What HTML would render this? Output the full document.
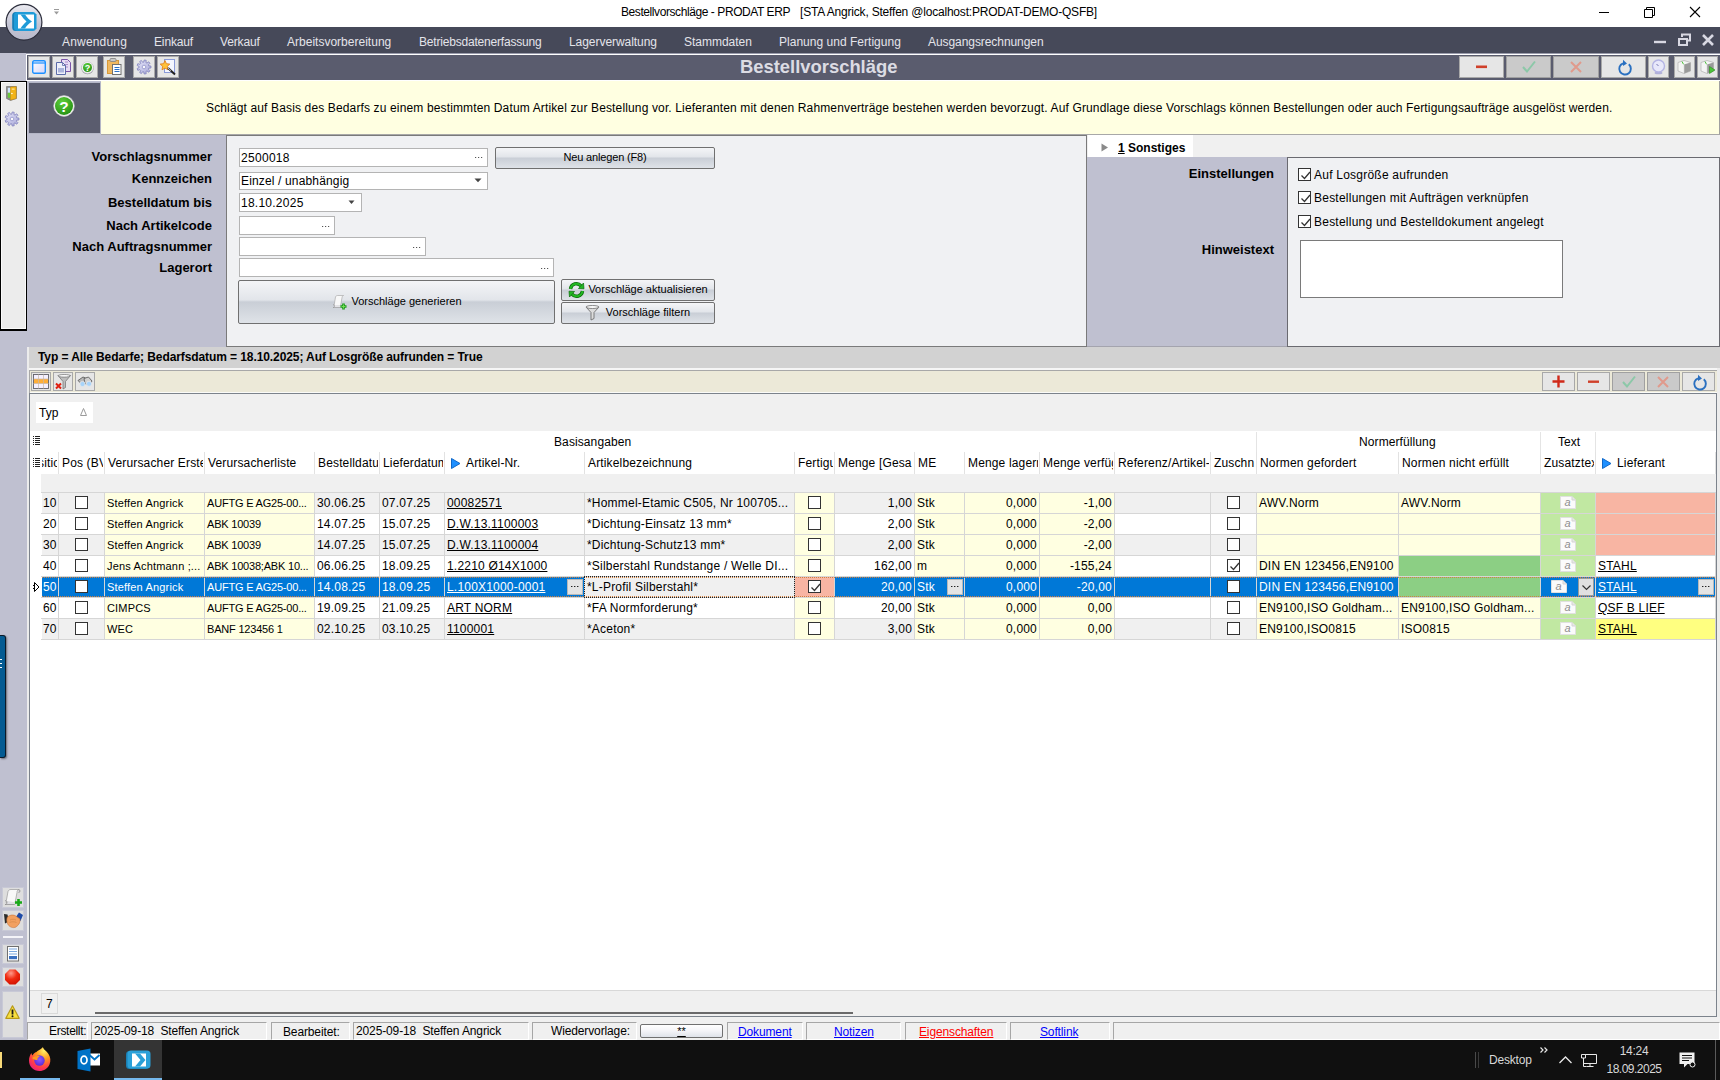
<!DOCTYPE html><html lang="de"><head><meta charset="utf-8"><title>Bestellvorschläge - PRODAT ERP</title><style>
html,body{margin:0;padding:0;}
body{width:1720px;height:1080px;overflow:hidden;position:relative;background:#bfc0d0;font-family:"Liberation Sans",sans-serif;font-size:12px;color:#000;}
div{position:absolute;box-sizing:border-box;white-space:nowrap;}
svg{position:absolute;overflow:visible;}
.t{line-height:14px;height:14px;}
.b{font-weight:bold;}
.m{color:#e4e4ea;font-size:12px;line-height:14px;}
.tb{background:#e6e6e6;border:1px solid #a8a8a8;}
.tbd{background:#cacaca;border:1px solid #a0a0a0;}
.in{background:#fff;border:1px solid #b4b4b4;}
.lbl{font-weight:bold;font-size:13px;line-height:16px;text-align:right;}
.btn{border:1px solid #707070;border-radius:2px;background:linear-gradient(#f4f5f7 0%,#e2e5ea 45%,#c9ced6 50%,#dfe3e8 100%);font-size:11px;text-align:center;}
.cb{width:13px;height:13px;background:#fff;border:1px solid #333;}
.c{line-height:20px;height:20px;overflow:hidden;letter-spacing:0.2px;}
.u{text-decoration:underline;}
.r{text-align:right;}
.s{font-size:11px;}
.h{line-height:20px;height:20px;overflow:hidden;letter-spacing:0.15px;}
</style></head><body>
<div style="left:0px;top:0px;width:1720px;height:27px;background:#fff;"></div>
<div class="t" style="left:621px;top:5px;letter-spacing:-0.42px;">Bestellvorschläge - PRODAT ERP</div>
<div class="t" style="left:800px;top:5px;letter-spacing:-0.2px;">[STA Angrick, Steffen @localhost:PRODAT-DEMO-QSFB]</div>
<svg style="left:1590px;top:0" width="130" height="27"><path d="M9 12.5h10" stroke="#000" fill="none"/><path d="M54.5 9.5h8v8h-8z M56.5 9.5v-2h8v8h-2" stroke="#000" fill="none"/><path d="M100 7l10 10M110 7l-10 10" stroke="#000" fill="none" stroke-width="1.1"/></svg>
<svg style="left:53px;top:8px" width="8" height="8"><path d="M1 1.5h5" stroke="#9a9a9a" fill="none"/><path d="M1 3.5h5l-2.5 3z" fill="#9a9a9a"/></svg>
<div style="left:0px;top:27px;width:1720px;height:26px;background:#464959;"></div>
<div class="m" style="left:62px;top:35px;letter-spacing:0.18px;">Anwendung</div>
<div class="m" style="left:154px;top:35px;letter-spacing:-0.14px;">Einkauf</div>
<div class="m" style="left:220px;top:35px;letter-spacing:-0.13px;">Verkauf</div>
<div class="m" style="left:287px;top:35px;letter-spacing:0.01px;">Arbeitsvorbereitung</div>
<div class="m" style="left:419px;top:35px;letter-spacing:-0.19px;">Betriebsdatenerfassung</div>
<div class="m" style="left:569px;top:35px;letter-spacing:-0.05px;">Lagerverwaltung</div>
<div class="m" style="left:684px;top:35px;letter-spacing:-0.02px;">Stammdaten</div>
<div class="m" style="left:779px;top:35px;letter-spacing:0.02px;">Planung und Fertigung</div>
<div class="m" style="left:928px;top:35px;letter-spacing:-0.07px;">Ausgangsrechnungen</div>
<svg style="left:1650px;top:30px" width="70" height="20"><path d="M4 12h12" stroke="#d8d8e2" stroke-width="2.4" fill="none"/><path d="M29 9h8v6h-8z" stroke="#d8d8e2" stroke-width="2" fill="none"/><path d="M32 7v-2.5h8v6h-2" stroke="#d8d8e2" stroke-width="2" fill="none"/><path d="M53 5l10 10M63 5l-10 10" stroke="#d8d8e2" stroke-width="2.6" fill="none"/></svg>
<div style="left:26px;top:53px;width:1694px;height:1px;background:#9a9cac;"></div>
<div style="left:26px;top:54px;width:1694px;height:1px;background:#fff;"></div>
<div style="left:26px;top:54px;width:1px;height:27px;background:#fff;"></div>
<div style="left:27px;top:55px;width:1693px;height:25px;background:#5a5c6e;"></div>
<div class="t" style="left:740px;top:56px;font-weight:bold;font-size:18.4px;line-height:22px;height:22px;color:#dcdce4;">Bestellvorschläge</div>
<div class="tb" style="left:28px;top:56px;width:22px;height:22px;"></div>
<div class="tb" style="left:52px;top:56px;width:22px;height:22px;"></div>
<div class="tb" style="left:76px;top:56px;width:22px;height:22px;"></div>
<div class="tb" style="left:103px;top:56px;width:22px;height:22px;"></div>
<div class="tb" style="left:133px;top:56px;width:22px;height:22px;"></div>
<div class="tb" style="left:157px;top:56px;width:22px;height:22px;"></div>
<div class="tb" style="left:1459px;top:56px;width:45px;height:22px;"></div>
<div class="tbd" style="left:1506px;top:56px;width:45px;height:22px;"></div>
<div class="tbd" style="left:1553px;top:56px;width:46px;height:22px;"></div>
<div class="tb" style="left:1601px;top:56px;width:45px;height:22px;"></div>
<div class="tb" style="left:1648px;top:56px;width:21px;height:22px;"></div>
<div class="tb" style="left:1674px;top:56px;width:21px;height:22px;"></div>
<div class="tb" style="left:1697px;top:56px;width:21px;height:22px;"></div>
<div style="left:26px;top:80px;width:1694px;height:1px;background:#fff;"></div>
<div style="left:101px;top:81px;width:1619px;height:54px;background:#ffffe1;border-right:1px solid #a0a0a0;border-bottom:1px solid #a8a8a8;"></div>
<div style="left:28px;top:82px;width:73px;height:52px;background:#5a5c6e;border:1px solid #b4b6c6;"></div>
<div class="t" style="left:206px;top:101px;letter-spacing:0.14px;">Schlägt auf Basis des Bedarfs zu einem bestimmten Datum Artikel zur Bestellung vor. Lieferanten mit denen Rahmenverträge bestehen werden bevorzugt. Auf Grundlage diese Vorschlags können Bestellungen oder auch Fertigungsaufträge ausgelöst werden.</div>
<div style="left:0px;top:81px;width:27px;height:250px;background:#ececec;border:1px solid #000;border-width:1px 1px 2px 1px;box-shadow:inset 1px 1px 0 #fafafa,inset -1px -1px 0 #fafafa;"></div>
<div style="left:226px;top:135px;width:861px;height:212px;background:#f0f1f3;border:1px solid #7a7a7a;"></div>
<div class="lbl" style="left:39px;top:149px;width:173px;">Vorschlagsnummer</div>
<div class="lbl" style="left:39px;top:171px;width:173px;">Kennzeichen</div>
<div class="lbl" style="left:39px;top:195px;width:173px;">Bestelldatum bis</div>
<div class="lbl" style="left:39px;top:218px;width:173px;">Nach Artikelcode</div>
<div class="lbl" style="left:39px;top:239px;width:173px;">Nach Auftragsnummer</div>
<div class="lbl" style="left:39px;top:260px;width:173px;">Lagerort</div>
<div class="in" style="left:239px;top:148px;width:249px;height:19px;"></div>
<div class="in" style="left:239px;top:172px;width:249px;height:18px;"></div>
<div class="in" style="left:239px;top:193px;width:123px;height:19px;"></div>
<div class="in" style="left:239px;top:216px;width:96px;height:19px;"></div>
<div class="in" style="left:239px;top:237px;width:187px;height:19px;"></div>
<div class="in" style="left:239px;top:258px;width:315px;height:19px;"></div>
<div class="t" style="left:241px;top:151px;letter-spacing:0.3px;">2500018</div>
<div class="t" style="left:241px;top:174px;letter-spacing:0.15px;">Einzel / unabhängig</div>
<div class="t" style="left:241px;top:196px;letter-spacing:0.25px;">18.10.2025</div>
<div class="btn" style="left:495px;top:147px;width:220px;height:22px;line-height:18px;letter-spacing:-0.15px;">Neu anlegen (F8)</div>
<div class="btn" style="left:238px;top:280px;width:317px;height:44px;line-height:40px;"><span style="position:relative;left:10px;">Vorschläge generieren</span></div>
<svg style="left:332px;top:295px" width="15" height="15"><path d="M2 11l1.500-9c0.300-1 1-1.500 2-1.500h6c-1 0.500-1.500 1.200-1.500 2.200l-1.500 8.300z" fill="#f8f8f8" stroke="#a0a0a0" stroke-width="0.600"/><path d="M1 9.500c0.800 0 1.500 0.600 1.500 1.500s-0.700 1.500-1.500 1.500h7c0.800 0 1.500-0.700 1.500-1.500" fill="#e4e4e8" stroke="#909090" stroke-width="0.600"/><path d="M8.500 11.500h6M11.500 8.500v6" stroke="#1a9a1a" stroke-width="2.600"/><path d="M9.500 11.500h4M11.500 9.500v4" stroke="#7ae05a" stroke-width="0.900"/></svg>
<div class="btn" style="left:561px;top:279px;width:154px;height:22px;line-height:18px;"><span style="position:relative;left:10px;">Vorschläge aktualisieren</span></div>
<svg style="left:568px;top:282px" width="17" height="16"><path d="M2.500 7a6 6 0 0 1 10.500-3.200" stroke="#0a6a0a" stroke-width="3.400" fill="none"/><path d="M2.500 7a6 6 0 0 1 10.500-3.200" stroke="#22b822" stroke-width="2" fill="none"/><path d="M10.500 6.500l5.500 0.300l-0.500-5.800z" fill="#22b822" stroke="#0a6a0a" stroke-width="0.700"/><path d="M14.500 9a6 6 0 0 1-10.500 3.200" stroke="#0a6a0a" stroke-width="3.400" fill="none"/><path d="M14.500 9a6 6 0 0 1-10.500 3.200" stroke="#22b822" stroke-width="2" fill="none"/><path d="M6.500 9.500l-5.500-0.300l0.500 5.800z" fill="#22b822" stroke="#0a6a0a" stroke-width="0.700"/></svg>
<div class="btn" style="left:561px;top:302px;width:154px;height:22px;line-height:18px;"><span style="position:relative;left:10px;">Vorschläge filtern</span></div>
<svg style="left:585px;top:305px" width="15" height="16"><path d="M1 2h13l-5 5.500v6l-3 1.500v-7.500z" fill="#dcdcdc" stroke="#707070" stroke-width="0.900"/><ellipse cx="7.500" cy="2" rx="6.500" ry="1.500" fill="#f8f8f8" stroke="#707070" stroke-width="0.800"/></svg>
<svg style="left:475px;top:157px" width="8" height="2"><path d="M0 0.500h1.200M3 0.500h1.200M6 0.500h1.200" stroke="#555" stroke-width="1"/></svg>
<svg style="left:322px;top:226px" width="8" height="2"><path d="M0 0.500h1.200M3 0.500h1.200M6 0.500h1.200" stroke="#555" stroke-width="1"/></svg>
<svg style="left:413px;top:247px" width="8" height="2"><path d="M0 0.500h1.200M3 0.500h1.200M6 0.500h1.200" stroke="#555" stroke-width="1"/></svg>
<svg style="left:541px;top:268px" width="8" height="2"><path d="M0 0.500h1.200M3 0.500h1.200M6 0.500h1.200" stroke="#555" stroke-width="1"/></svg>
<svg style="left:474px;top:178px" width="9" height="5"><path d="M0.500 0.500h7l-3.500 3.800z" fill="#444"/></svg>
<svg style="left:348px;top:200px" width="8" height="5"><path d="M0.500 0.500h6l-3 3.500z" fill="#444"/></svg>
<div style="left:1087px;top:135px;width:633px;height:22px;background:#f0f0f0;"></div>
<div style="left:1088px;top:135px;width:105px;height:22px;background:#fff;"></div>
<div class="t" style="left:1118px;top:141px;font-weight:bold;"><span class="u">1</span> Sonstiges</div>
<svg style="left:1101px;top:143px" width="8" height="9"><path d="M0.500 0.500L7 4.500L0.500 8.500z" fill="#8a8a8a"/></svg>
<div style="left:1287px;top:157px;width:433px;height:190px;background:#f0f1f3;border:1px solid #6a6a70;"></div>
<div class="lbl" style="left:1100px;top:166px;width:174px;">Einstellungen</div>
<div class="lbl" style="left:1100px;top:242px;width:174px;">Hinweistext</div>
<div class="cb" style="left:1298px;top:168px;"><svg style="left:1px;top:1px" width="11" height="11"><path d="M1.500 5.500L4.500 8.500L10 2" stroke="#333" stroke-width="1.300" fill="none"/></svg></div>
<div class="t" style="left:1314px;top:168px;letter-spacing:0.23px;">Auf Losgröße aufrunden</div>
<div class="cb" style="left:1298px;top:191px;"><svg style="left:1px;top:1px" width="11" height="11"><path d="M1.500 5.500L4.500 8.500L10 2" stroke="#333" stroke-width="1.300" fill="none"/></svg></div>
<div class="t" style="left:1314px;top:191px;letter-spacing:0.23px;">Bestellungen mit Aufträgen verknüpfen</div>
<div class="cb" style="left:1298px;top:215px;"><svg style="left:1px;top:1px" width="11" height="11"><path d="M1.500 5.500L4.500 8.500L10 2" stroke="#333" stroke-width="1.300" fill="none"/></svg></div>
<div class="t" style="left:1314px;top:215px;letter-spacing:0.23px;">Bestellung und Bestelldokument angelegt</div>
<div style="left:1300px;top:240px;width:263px;height:58px;background:#fff;border:1px solid #7a7a7a;"></div>
<div style="left:27px;top:347px;width:1693px;height:21px;background:#d2d2d2;"></div>
<div class="t" style="left:38px;top:350px;font-weight:bold;letter-spacing:-0.09px;">Typ = Alle Bedarfe; Bedarfsdatum = 18.10.2025; Auf Losgröße aufrunden = True</div>
<div style="left:27px;top:368px;width:1693px;height:2px;background:#f6f6f6;"></div>
<div style="left:27px;top:347px;width:2px;height:693px;background:#ececec;"></div>
<div style="left:1717px;top:368px;width:3px;height:672px;background:#ececec;"></div>
<div style="left:29px;top:370px;width:1688px;height:23px;background:#ece9d8;border-top:1px solid #a8a8a8;border-left:1px solid #a8a8a8;"></div>
<div style="left:1087px;top:346px;width:200px;height:1px;background:#a4a4ae;"></div>
<div style="left:30px;top:392px;width:1687px;height:1px;background:#fbfbf8;"></div>
<div class="tb" style="left:31px;top:372px;width:20px;height:19px;"></div>
<div class="tb" style="left:53px;top:372px;width:20px;height:19px;"></div>
<div class="tb" style="left:75px;top:372px;width:20px;height:19px;"></div>
<div class="tb" style="left:1542px;top:372px;width:33px;height:19px;"></div>
<div class="tb" style="left:1577px;top:372px;width:33px;height:19px;"></div>
<div class="tbd" style="left:1612px;top:372px;width:33px;height:19px;"></div>
<div class="tbd" style="left:1647px;top:372px;width:33px;height:19px;"></div>
<div class="tb" style="left:1682px;top:372px;width:33px;height:19px;"></div>
<div style="left:29px;top:393px;width:1688px;height:624px;background:#fff;border:1px solid #7c838c;"></div>
<div style="left:30px;top:394px;width:1686px;height:37px;background:#f0f0f0;"></div>
<div style="left:36px;top:402px;width:57px;height:21px;background:#fff;"></div>
<div class="t" style="left:39px;top:406px;">Typ</div>
<div style="left:30px;top:431px;width:1686px;height:43px;background:#fff;"></div>
<div style="left:30px;top:431px;width:11px;height:208px;background:#fff;"></div>
<div class="t" style="left:554px;top:435px;letter-spacing:0.1px;">Basisangaben</div>
<div class="t" style="left:1359px;top:435px;letter-spacing:0.1px;">Normerfüllung</div>
<div class="t" style="left:1558px;top:435px;">Text</div>
<div style="left:1256px;top:432px;width:1px;height:20px;background:#e4e4e4;"></div>
<div style="left:1540px;top:432px;width:1px;height:20px;background:#e4e4e4;"></div>
<div style="left:1595px;top:432px;width:1px;height:20px;background:#e4e4e4;"></div>
<div class="h" style="left:42px;top:453px;width:15px;"><span style="position:relative;left:-19px;">Position</span></div>
<div style="left:58px;top:452px;width:1px;height:22px;background:#e2e2e2;"></div>
<div class="h" style="left:59px;top:453px;width:44px;padding-left:3px;">Pos (BV</div>
<div style="left:104px;top:452px;width:1px;height:22px;background:#e2e2e2;"></div>
<div class="h" style="left:105px;top:453px;width:98px;padding-left:3px;">Verursacher Erste</div>
<div style="left:204px;top:452px;width:1px;height:22px;background:#e2e2e2;"></div>
<div class="h" style="left:205px;top:453px;width:108px;padding-left:3px;">Verursacherliste</div>
<div style="left:314px;top:452px;width:1px;height:22px;background:#e2e2e2;"></div>
<div class="h" style="left:315px;top:453px;width:63px;padding-left:3px;">Bestelldatu</div>
<div style="left:379px;top:452px;width:1px;height:22px;background:#e2e2e2;"></div>
<div class="h" style="left:380px;top:453px;width:63px;padding-left:3px;">Lieferdatum</div>
<div style="left:444px;top:452px;width:1px;height:22px;background:#e2e2e2;"></div>
<div class="h" style="left:445px;top:453px;width:137px;padding-left:21px;">Artikel-Nr.</div>
<svg style="left:451px;top:458px" width="10" height="11"><path d="M0.5 0.5L9 5.5L0.5 10.5z" fill="#1e90ff" stroke="#1068c8" stroke-width="1"/></svg>
<div style="left:584px;top:452px;width:1px;height:22px;background:#e2e2e2;"></div>
<div class="h" style="left:585px;top:453px;width:208px;padding-left:3px;">Artikelbezeichnung</div>
<div style="left:794px;top:452px;width:1px;height:22px;background:#e2e2e2;"></div>
<div class="h" style="left:795px;top:453px;width:38px;padding-left:3px;">Fertigu</div>
<div style="left:834px;top:452px;width:1px;height:22px;background:#e2e2e2;"></div>
<div class="h" style="left:835px;top:453px;width:78px;padding-left:3px;">Menge [Gesa</div>
<div style="left:914px;top:452px;width:1px;height:22px;background:#e2e2e2;"></div>
<div class="h" style="left:915px;top:453px;width:48px;padding-left:3px;">ME</div>
<div style="left:964px;top:452px;width:1px;height:22px;background:#e2e2e2;"></div>
<div class="h" style="left:965px;top:453px;width:73px;padding-left:3px;">Menge lagern</div>
<div style="left:1039px;top:452px;width:1px;height:22px;background:#e2e2e2;"></div>
<div class="h" style="left:1040px;top:453px;width:73px;padding-left:3px;">Menge verfüg</div>
<div style="left:1114px;top:452px;width:1px;height:22px;background:#e2e2e2;"></div>
<div class="h" style="left:1115px;top:453px;width:94px;padding-left:3px;">Referenz/Artikel-N</div>
<div style="left:1210px;top:452px;width:1px;height:22px;background:#e2e2e2;"></div>
<div class="h" style="left:1211px;top:453px;width:44px;padding-left:3px;">Zuschn</div>
<div style="left:1256px;top:452px;width:1px;height:22px;background:#e2e2e2;"></div>
<div class="h" style="left:1257px;top:453px;width:140px;padding-left:3px;">Normen gefordert</div>
<div style="left:1398px;top:452px;width:1px;height:22px;background:#e2e2e2;"></div>
<div class="h" style="left:1399px;top:453px;width:140px;padding-left:3px;">Normen nicht erfüllt</div>
<div style="left:1540px;top:452px;width:1px;height:22px;background:#e2e2e2;"></div>
<div class="h" style="left:1541px;top:453px;width:53px;padding-left:3px;">Zusatztex</div>
<div style="left:1595px;top:452px;width:1px;height:22px;background:#e2e2e2;"></div>
<div class="h" style="left:1596px;top:453px;width:117px;padding-left:21px;">Lieferant</div>
<svg style="left:1602px;top:458px" width="10" height="11"><path d="M0.5 0.5L9 5.5L0.5 10.5z" fill="#1e90ff" stroke="#1068c8" stroke-width="1"/></svg>
<div style="left:1715px;top:452px;width:1px;height:22px;background:#e2e2e2;"></div>
<div style="left:41px;top:474px;width:1675px;height:18px;background:#f0f0f0;"></div>
<div style="left:41px;top:492px;width:1675px;height:1px;background:#d6d6d6;"></div>
<div style="left:42px;top:493px;width:16px;height:20px;background:#f0f0f0;"></div>
<div class="c" style="left:42px;top:493px;width:16px;color:#000;padding-left:2px;padding-left:1px;">10</div>
<div style="left:59px;top:493px;width:45px;height:20px;background:#f0f0f0;"></div>
<div class="cb" style="left:75px;top:496px;"></div>
<div style="left:105px;top:493px;width:99px;height:20px;background:#ffffe1;"></div>
<div class="c" style="left:105px;top:493px;width:99px;color:#000;padding-left:2px;font-size:11px;letter-spacing:0.17px;">Steffen Angrick</div>
<div style="left:205px;top:493px;width:109px;height:20px;background:#ffffe1;"></div>
<div class="c" style="left:205px;top:493px;width:109px;color:#000;padding-left:2px;font-size:11px;letter-spacing:-0.2px;">AUFTG E AG25-00...</div>
<div style="left:315px;top:493px;width:64px;height:20px;background:#f0f0f0;"></div>
<div class="c" style="left:315px;top:493px;width:64px;color:#000;padding-left:2px;">30.06.25</div>
<div style="left:380px;top:493px;width:64px;height:20px;background:#f0f0f0;"></div>
<div class="c" style="left:380px;top:493px;width:64px;color:#000;padding-left:2px;">07.07.25</div>
<div style="left:445px;top:493px;width:139px;height:20px;background:#f0f0f0;"></div>
<div class="c" style="left:445px;top:493px;width:139px;color:#000;padding-left:2px;"><span class="u">00082571</span></div>
<div style="left:585px;top:493px;width:209px;height:20px;background:#f0f0f0;"></div>
<div class="c" style="left:585px;top:493px;width:209px;color:#000;padding-left:2px;">*Hommel-Etamic C505, Nr 100705...</div>
<div style="left:795px;top:493px;width:39px;height:20px;background:#ffffe1;"></div>
<div class="cb" style="left:808px;top:496px;"></div>
<div style="left:835px;top:493px;width:79px;height:20px;background:#f0f0f0;"></div>
<div class="c" style="left:835px;top:493px;width:79px;color:#000;text-align:right;padding-right:2px;">1,00</div>
<div style="left:915px;top:493px;width:49px;height:20px;background:#ffffe1;"></div>
<div class="c" style="left:915px;top:493px;width:49px;color:#000;padding-left:2px;">Stk</div>
<div style="left:965px;top:493px;width:74px;height:20px;background:#ffffe1;"></div>
<div class="c" style="left:965px;top:493px;width:74px;color:#000;text-align:right;padding-right:2px;">0,000</div>
<div style="left:1040px;top:493px;width:74px;height:20px;background:#ffffe1;"></div>
<div class="c" style="left:1040px;top:493px;width:74px;color:#000;text-align:right;padding-right:2px;">-1,00</div>
<div style="left:1115px;top:493px;width:95px;height:20px;background:#f0f0f0;"></div>
<div style="left:1211px;top:493px;width:45px;height:20px;background:#f0f0f0;"></div>
<div class="cb" style="left:1227px;top:496px;"></div>
<div style="left:1257px;top:493px;width:141px;height:20px;background:#ffffe1;"></div>
<div class="c" style="left:1257px;top:493px;width:141px;color:#000;padding-left:2px;">AWV.Norm</div>
<div style="left:1399px;top:493px;width:141px;height:20px;background:#ffffe1;"></div>
<div class="c" style="left:1399px;top:493px;width:141px;color:#000;padding-left:2px;">AWV.Norm</div>
<div style="left:1541px;top:493px;width:54px;height:20px;background:#c1e8a2;"></div>
<div style="left:1560px;top:496px;width:16px;height:13px;"><svg style="left:0;top:0" width="16" height="13"><path d="M0.5 0.5h11.5l3.5 3.5v8.5h-15z" fill="#fbfbfb" stroke="#e0e0e0"/><path d="M12 0.5v3.5h3.5" fill="#e8e8e8" stroke="#d4d4d4"/></svg><div style="left:3px;top:0;width:9px;font-size:11px;line-height:12px;font-style:italic;color:#8e8e8e;text-align:center;">a</div></div>
<div style="left:1596px;top:493px;width:119px;height:20px;background:#f8b5a3;"></div>
<div style="left:41px;top:513px;width:1675px;height:1px;background:#d6d6d6;"></div>
<div style="left:42px;top:514px;width:16px;height:20px;background:#fff;"></div>
<div class="c" style="left:42px;top:514px;width:16px;color:#000;padding-left:2px;padding-left:1px;">20</div>
<div style="left:59px;top:514px;width:45px;height:20px;background:#fff;"></div>
<div class="cb" style="left:75px;top:517px;"></div>
<div style="left:105px;top:514px;width:99px;height:20px;background:#ffffe1;"></div>
<div class="c" style="left:105px;top:514px;width:99px;color:#000;padding-left:2px;font-size:11px;letter-spacing:0.17px;">Steffen Angrick</div>
<div style="left:205px;top:514px;width:109px;height:20px;background:#ffffe1;"></div>
<div class="c" style="left:205px;top:514px;width:109px;color:#000;padding-left:2px;font-size:11px;letter-spacing:-0.2px;">ABK 10039</div>
<div style="left:315px;top:514px;width:64px;height:20px;background:#fff;"></div>
<div class="c" style="left:315px;top:514px;width:64px;color:#000;padding-left:2px;">14.07.25</div>
<div style="left:380px;top:514px;width:64px;height:20px;background:#fff;"></div>
<div class="c" style="left:380px;top:514px;width:64px;color:#000;padding-left:2px;">15.07.25</div>
<div style="left:445px;top:514px;width:139px;height:20px;background:#fff;"></div>
<div class="c" style="left:445px;top:514px;width:139px;color:#000;padding-left:2px;"><span class="u">D.W.13.1100003</span></div>
<div style="left:585px;top:514px;width:209px;height:20px;background:#fff;"></div>
<div class="c" style="left:585px;top:514px;width:209px;color:#000;padding-left:2px;">*Dichtung-Einsatz 13 mm*</div>
<div style="left:795px;top:514px;width:39px;height:20px;background:#ffffe1;"></div>
<div class="cb" style="left:808px;top:517px;"></div>
<div style="left:835px;top:514px;width:79px;height:20px;background:#fff;"></div>
<div class="c" style="left:835px;top:514px;width:79px;color:#000;text-align:right;padding-right:2px;">2,00</div>
<div style="left:915px;top:514px;width:49px;height:20px;background:#ffffe1;"></div>
<div class="c" style="left:915px;top:514px;width:49px;color:#000;padding-left:2px;">Stk</div>
<div style="left:965px;top:514px;width:74px;height:20px;background:#ffffe1;"></div>
<div class="c" style="left:965px;top:514px;width:74px;color:#000;text-align:right;padding-right:2px;">0,000</div>
<div style="left:1040px;top:514px;width:74px;height:20px;background:#ffffe1;"></div>
<div class="c" style="left:1040px;top:514px;width:74px;color:#000;text-align:right;padding-right:2px;">-2,00</div>
<div style="left:1115px;top:514px;width:95px;height:20px;background:#fff;"></div>
<div style="left:1211px;top:514px;width:45px;height:20px;background:#fff;"></div>
<div class="cb" style="left:1227px;top:517px;"></div>
<div style="left:1257px;top:514px;width:141px;height:20px;background:#ffffe1;"></div>
<div style="left:1399px;top:514px;width:141px;height:20px;background:#ffffe1;"></div>
<div style="left:1541px;top:514px;width:54px;height:20px;background:#c1e8a2;"></div>
<div style="left:1560px;top:517px;width:16px;height:13px;"><svg style="left:0;top:0" width="16" height="13"><path d="M0.5 0.5h11.5l3.5 3.5v8.5h-15z" fill="#fbfbfb" stroke="#e0e0e0"/><path d="M12 0.5v3.5h3.5" fill="#e8e8e8" stroke="#d4d4d4"/></svg><div style="left:3px;top:0;width:9px;font-size:11px;line-height:12px;font-style:italic;color:#8e8e8e;text-align:center;">a</div></div>
<div style="left:1596px;top:514px;width:119px;height:20px;background:#f8b5a3;"></div>
<div style="left:41px;top:534px;width:1675px;height:1px;background:#d6d6d6;"></div>
<div style="left:42px;top:535px;width:16px;height:20px;background:#f0f0f0;"></div>
<div class="c" style="left:42px;top:535px;width:16px;color:#000;padding-left:2px;padding-left:1px;">30</div>
<div style="left:59px;top:535px;width:45px;height:20px;background:#f0f0f0;"></div>
<div class="cb" style="left:75px;top:538px;"></div>
<div style="left:105px;top:535px;width:99px;height:20px;background:#ffffe1;"></div>
<div class="c" style="left:105px;top:535px;width:99px;color:#000;padding-left:2px;font-size:11px;letter-spacing:0.17px;">Steffen Angrick</div>
<div style="left:205px;top:535px;width:109px;height:20px;background:#ffffe1;"></div>
<div class="c" style="left:205px;top:535px;width:109px;color:#000;padding-left:2px;font-size:11px;letter-spacing:-0.2px;">ABK 10039</div>
<div style="left:315px;top:535px;width:64px;height:20px;background:#f0f0f0;"></div>
<div class="c" style="left:315px;top:535px;width:64px;color:#000;padding-left:2px;">14.07.25</div>
<div style="left:380px;top:535px;width:64px;height:20px;background:#f0f0f0;"></div>
<div class="c" style="left:380px;top:535px;width:64px;color:#000;padding-left:2px;">15.07.25</div>
<div style="left:445px;top:535px;width:139px;height:20px;background:#f0f0f0;"></div>
<div class="c" style="left:445px;top:535px;width:139px;color:#000;padding-left:2px;"><span class="u">D.W.13.1100004</span></div>
<div style="left:585px;top:535px;width:209px;height:20px;background:#f0f0f0;"></div>
<div class="c" style="left:585px;top:535px;width:209px;color:#000;padding-left:2px;">*Dichtung-Schutz13 mm*</div>
<div style="left:795px;top:535px;width:39px;height:20px;background:#ffffe1;"></div>
<div class="cb" style="left:808px;top:538px;"></div>
<div style="left:835px;top:535px;width:79px;height:20px;background:#f0f0f0;"></div>
<div class="c" style="left:835px;top:535px;width:79px;color:#000;text-align:right;padding-right:2px;">2,00</div>
<div style="left:915px;top:535px;width:49px;height:20px;background:#ffffe1;"></div>
<div class="c" style="left:915px;top:535px;width:49px;color:#000;padding-left:2px;">Stk</div>
<div style="left:965px;top:535px;width:74px;height:20px;background:#ffffe1;"></div>
<div class="c" style="left:965px;top:535px;width:74px;color:#000;text-align:right;padding-right:2px;">0,000</div>
<div style="left:1040px;top:535px;width:74px;height:20px;background:#ffffe1;"></div>
<div class="c" style="left:1040px;top:535px;width:74px;color:#000;text-align:right;padding-right:2px;">-2,00</div>
<div style="left:1115px;top:535px;width:95px;height:20px;background:#f0f0f0;"></div>
<div style="left:1211px;top:535px;width:45px;height:20px;background:#f0f0f0;"></div>
<div class="cb" style="left:1227px;top:538px;"></div>
<div style="left:1257px;top:535px;width:141px;height:20px;background:#ffffe1;"></div>
<div style="left:1399px;top:535px;width:141px;height:20px;background:#ffffe1;"></div>
<div style="left:1541px;top:535px;width:54px;height:20px;background:#c1e8a2;"></div>
<div style="left:1560px;top:538px;width:16px;height:13px;"><svg style="left:0;top:0" width="16" height="13"><path d="M0.5 0.5h11.5l3.5 3.5v8.5h-15z" fill="#fbfbfb" stroke="#e0e0e0"/><path d="M12 0.5v3.5h3.5" fill="#e8e8e8" stroke="#d4d4d4"/></svg><div style="left:3px;top:0;width:9px;font-size:11px;line-height:12px;font-style:italic;color:#8e8e8e;text-align:center;">a</div></div>
<div style="left:1596px;top:535px;width:119px;height:20px;background:#f8b5a3;"></div>
<div style="left:41px;top:555px;width:1675px;height:1px;background:#d6d6d6;"></div>
<div style="left:42px;top:556px;width:16px;height:20px;background:#fff;"></div>
<div class="c" style="left:42px;top:556px;width:16px;color:#000;padding-left:2px;padding-left:1px;">40</div>
<div style="left:59px;top:556px;width:45px;height:20px;background:#fff;"></div>
<div class="cb" style="left:75px;top:559px;"></div>
<div style="left:105px;top:556px;width:99px;height:20px;background:#ffffe1;"></div>
<div class="c" style="left:105px;top:556px;width:99px;color:#000;padding-left:2px;font-size:11px;letter-spacing:0.17px;">Jens Achtmann ;...</div>
<div style="left:205px;top:556px;width:109px;height:20px;background:#ffffe1;"></div>
<div class="c" style="left:205px;top:556px;width:109px;color:#000;padding-left:2px;font-size:11px;letter-spacing:-0.2px;">ABK 10038;ABK 10...</div>
<div style="left:315px;top:556px;width:64px;height:20px;background:#fff;"></div>
<div class="c" style="left:315px;top:556px;width:64px;color:#000;padding-left:2px;">06.06.25</div>
<div style="left:380px;top:556px;width:64px;height:20px;background:#fff;"></div>
<div class="c" style="left:380px;top:556px;width:64px;color:#000;padding-left:2px;">18.09.25</div>
<div style="left:445px;top:556px;width:139px;height:20px;background:#fff;"></div>
<div class="c" style="left:445px;top:556px;width:139px;color:#000;padding-left:2px;"><span class="u">1.2210 Ø14X1000</span></div>
<div style="left:585px;top:556px;width:209px;height:20px;background:#fff;"></div>
<div class="c" style="left:585px;top:556px;width:209px;color:#000;padding-left:2px;">*Silberstahl Rundstange / Welle DI...</div>
<div style="left:795px;top:556px;width:39px;height:20px;background:#ffffe1;"></div>
<div class="cb" style="left:808px;top:559px;"></div>
<div style="left:835px;top:556px;width:79px;height:20px;background:#fff;"></div>
<div class="c" style="left:835px;top:556px;width:79px;color:#000;text-align:right;padding-right:2px;">162,00</div>
<div style="left:915px;top:556px;width:49px;height:20px;background:#ffffe1;"></div>
<div class="c" style="left:915px;top:556px;width:49px;color:#000;padding-left:2px;">m</div>
<div style="left:965px;top:556px;width:74px;height:20px;background:#ffffe1;"></div>
<div class="c" style="left:965px;top:556px;width:74px;color:#000;text-align:right;padding-right:2px;">0,000</div>
<div style="left:1040px;top:556px;width:74px;height:20px;background:#ffffe1;"></div>
<div class="c" style="left:1040px;top:556px;width:74px;color:#000;text-align:right;padding-right:2px;">-155,24</div>
<div style="left:1115px;top:556px;width:95px;height:20px;background:#fff;"></div>
<div style="left:1211px;top:556px;width:45px;height:20px;background:#fff;"></div>
<div class="cb" style="left:1227px;top:559px;"><svg style="left:1px;top:1px" width="11" height="11"><path d="M1.500 5.500L4.500 8.500L10 2" stroke="#333" stroke-width="1.300" fill="none"/></svg></div>
<div style="left:1257px;top:556px;width:141px;height:20px;background:#ffffe1;"></div>
<div class="c" style="left:1257px;top:556px;width:141px;color:#000;padding-left:2px;">DIN EN 123456,EN9100</div>
<div style="left:1399px;top:556px;width:141px;height:20px;background:#8ccf84;"></div>
<div style="left:1541px;top:556px;width:54px;height:20px;background:#c1e8a2;"></div>
<div style="left:1560px;top:559px;width:16px;height:13px;"><svg style="left:0;top:0" width="16" height="13"><path d="M0.5 0.5h11.5l3.5 3.5v8.5h-15z" fill="#fbfbfb" stroke="#e0e0e0"/><path d="M12 0.5v3.5h3.5" fill="#e8e8e8" stroke="#d4d4d4"/></svg><div style="left:3px;top:0;width:9px;font-size:11px;line-height:12px;font-style:italic;color:#8e8e8e;text-align:center;">a</div></div>
<div style="left:1596px;top:556px;width:119px;height:20px;background:#fff;"></div>
<div class="c" style="left:1596px;top:556px;width:119px;color:#000;padding-left:2px;"><span class="u">STAHL</span></div>
<div style="left:41px;top:576px;width:1675px;height:1px;background:#d6d6d6;"></div>
<div style="left:42px;top:577px;width:16px;height:20px;background:#0078d7;"></div>
<div class="c" style="left:42px;top:577px;width:16px;color:#fff;padding-left:2px;padding-left:1px;">50</div>
<div style="left:59px;top:577px;width:45px;height:20px;background:#0078d7;"></div>
<div class="cb" style="left:75px;top:580px;"></div>
<div style="left:105px;top:577px;width:99px;height:20px;background:#0078d7;"></div>
<div class="c" style="left:105px;top:577px;width:99px;color:#fff;padding-left:2px;font-size:11px;letter-spacing:0.17px;">Steffen Angrick</div>
<div style="left:205px;top:577px;width:109px;height:20px;background:#0078d7;"></div>
<div class="c" style="left:205px;top:577px;width:109px;color:#fff;padding-left:2px;font-size:11px;letter-spacing:-0.2px;">AUFTG E AG25-00...</div>
<div style="left:315px;top:577px;width:64px;height:20px;background:#0078d7;"></div>
<div class="c" style="left:315px;top:577px;width:64px;color:#fff;padding-left:2px;">14.08.25</div>
<div style="left:380px;top:577px;width:64px;height:20px;background:#0078d7;"></div>
<div class="c" style="left:380px;top:577px;width:64px;color:#fff;padding-left:2px;">18.09.25</div>
<div style="left:445px;top:577px;width:139px;height:20px;background:#0078d7;"></div>
<div class="c" style="left:445px;top:577px;width:139px;color:#fff;padding-left:2px;"><span class="u">L.100X1000-0001</span></div>
<div style="left:585px;top:577px;width:209px;height:20px;background:#f0f0f0;"></div>
<div class="c" style="left:585px;top:577px;width:209px;color:#000;padding-left:2px;">*L-Profil Silberstahl*</div>
<div style="left:795px;top:577px;width:39px;height:20px;background:#f8b5a3;"></div>
<div class="cb" style="left:808px;top:580px;"><svg style="left:1px;top:1px" width="11" height="11"><path d="M1.500 5.500L4.500 8.500L10 2" stroke="#333" stroke-width="1.300" fill="none"/></svg></div>
<div style="left:835px;top:577px;width:79px;height:20px;background:#0078d7;"></div>
<div class="c" style="left:835px;top:577px;width:79px;color:#fff;text-align:right;padding-right:2px;">20,00</div>
<div style="left:915px;top:577px;width:49px;height:20px;background:#0078d7;"></div>
<div class="c" style="left:915px;top:577px;width:49px;color:#fff;padding-left:2px;">Stk</div>
<div style="left:965px;top:577px;width:74px;height:20px;background:#0078d7;"></div>
<div class="c" style="left:965px;top:577px;width:74px;color:#fff;text-align:right;padding-right:2px;">0,000</div>
<div style="left:1040px;top:577px;width:74px;height:20px;background:#0078d7;"></div>
<div class="c" style="left:1040px;top:577px;width:74px;color:#fff;text-align:right;padding-right:2px;">-20,00</div>
<div style="left:1115px;top:577px;width:95px;height:20px;background:#0078d7;"></div>
<div style="left:1211px;top:577px;width:45px;height:20px;background:#0078d7;"></div>
<div class="cb" style="left:1227px;top:580px;"></div>
<div style="left:1257px;top:577px;width:141px;height:20px;background:#0078d7;"></div>
<div class="c" style="left:1257px;top:577px;width:141px;color:#fff;padding-left:2px;">DIN EN 123456,EN9100</div>
<div style="left:1399px;top:577px;width:141px;height:20px;background:#8ccf84;"></div>
<div style="left:1541px;top:577px;width:54px;height:20px;background:#0078d7;"></div>
<div style="left:1551px;top:580px;width:16px;height:13px;"><svg style="left:0;top:0" width="16" height="13"><path d="M0.5 0.5h11.5l3.5 3.5v8.5h-15z" fill="#fbfbfb" stroke="#e0e0e0"/><path d="M12 0.5v3.5h3.5" fill="#e8e8e8" stroke="#d4d4d4"/></svg><div style="left:3px;top:0;width:9px;font-size:11px;line-height:12px;font-style:italic;color:#8e8e8e;text-align:center;">a</div></div>
<div style="left:1596px;top:577px;width:119px;height:20px;background:#0078d7;"></div>
<div class="c" style="left:1596px;top:577px;width:119px;color:#fff;padding-left:2px;"><span class="u">STAHL</span></div>
<div style="left:41px;top:597px;width:1675px;height:1px;background:#d6d6d6;"></div>
<div style="left:42px;top:598px;width:16px;height:20px;background:#fff;"></div>
<div class="c" style="left:42px;top:598px;width:16px;color:#000;padding-left:2px;padding-left:1px;">60</div>
<div style="left:59px;top:598px;width:45px;height:20px;background:#fff;"></div>
<div class="cb" style="left:75px;top:601px;"></div>
<div style="left:105px;top:598px;width:99px;height:20px;background:#ffffe1;"></div>
<div class="c" style="left:105px;top:598px;width:99px;color:#000;padding-left:2px;font-size:11px;letter-spacing:0.17px;">CIMPCS</div>
<div style="left:205px;top:598px;width:109px;height:20px;background:#ffffe1;"></div>
<div class="c" style="left:205px;top:598px;width:109px;color:#000;padding-left:2px;font-size:11px;letter-spacing:-0.2px;">AUFTG E AG25-00...</div>
<div style="left:315px;top:598px;width:64px;height:20px;background:#fff;"></div>
<div class="c" style="left:315px;top:598px;width:64px;color:#000;padding-left:2px;">19.09.25</div>
<div style="left:380px;top:598px;width:64px;height:20px;background:#fff;"></div>
<div class="c" style="left:380px;top:598px;width:64px;color:#000;padding-left:2px;">21.09.25</div>
<div style="left:445px;top:598px;width:139px;height:20px;background:#fff;"></div>
<div class="c" style="left:445px;top:598px;width:139px;color:#000;padding-left:2px;"><span class="u">ART NORM</span></div>
<div style="left:585px;top:598px;width:209px;height:20px;background:#fff;"></div>
<div class="c" style="left:585px;top:598px;width:209px;color:#000;padding-left:2px;">*FA Normforderung*</div>
<div style="left:795px;top:598px;width:39px;height:20px;background:#ffffe1;"></div>
<div class="cb" style="left:808px;top:601px;"></div>
<div style="left:835px;top:598px;width:79px;height:20px;background:#fff;"></div>
<div class="c" style="left:835px;top:598px;width:79px;color:#000;text-align:right;padding-right:2px;">20,00</div>
<div style="left:915px;top:598px;width:49px;height:20px;background:#ffffe1;"></div>
<div class="c" style="left:915px;top:598px;width:49px;color:#000;padding-left:2px;">Stk</div>
<div style="left:965px;top:598px;width:74px;height:20px;background:#ffffe1;"></div>
<div class="c" style="left:965px;top:598px;width:74px;color:#000;text-align:right;padding-right:2px;">0,000</div>
<div style="left:1040px;top:598px;width:74px;height:20px;background:#ffffe1;"></div>
<div class="c" style="left:1040px;top:598px;width:74px;color:#000;text-align:right;padding-right:2px;">0,00</div>
<div style="left:1115px;top:598px;width:95px;height:20px;background:#fff;"></div>
<div style="left:1211px;top:598px;width:45px;height:20px;background:#fff;"></div>
<div class="cb" style="left:1227px;top:601px;"></div>
<div style="left:1257px;top:598px;width:141px;height:20px;background:#ffffe1;"></div>
<div class="c" style="left:1257px;top:598px;width:141px;color:#000;padding-left:2px;">EN9100,ISO Goldham...</div>
<div style="left:1399px;top:598px;width:141px;height:20px;background:#ffffe1;"></div>
<div class="c" style="left:1399px;top:598px;width:141px;color:#000;padding-left:2px;">EN9100,ISO Goldham...</div>
<div style="left:1541px;top:598px;width:54px;height:20px;background:#c1e8a2;"></div>
<div style="left:1560px;top:601px;width:16px;height:13px;"><svg style="left:0;top:0" width="16" height="13"><path d="M0.5 0.5h11.5l3.5 3.5v8.5h-15z" fill="#fbfbfb" stroke="#e0e0e0"/><path d="M12 0.5v3.5h3.5" fill="#e8e8e8" stroke="#d4d4d4"/></svg><div style="left:3px;top:0;width:9px;font-size:11px;line-height:12px;font-style:italic;color:#8e8e8e;text-align:center;">a</div></div>
<div style="left:1596px;top:598px;width:119px;height:20px;background:#fff;"></div>
<div class="c" style="left:1596px;top:598px;width:119px;color:#000;padding-left:2px;"><span class="u">QSF B LIEF</span></div>
<div style="left:41px;top:618px;width:1675px;height:1px;background:#d6d6d6;"></div>
<div style="left:42px;top:619px;width:16px;height:20px;background:#f0f0f0;"></div>
<div class="c" style="left:42px;top:619px;width:16px;color:#000;padding-left:2px;padding-left:1px;">70</div>
<div style="left:59px;top:619px;width:45px;height:20px;background:#f0f0f0;"></div>
<div class="cb" style="left:75px;top:622px;"></div>
<div style="left:105px;top:619px;width:99px;height:20px;background:#ffffe1;"></div>
<div class="c" style="left:105px;top:619px;width:99px;color:#000;padding-left:2px;font-size:11px;letter-spacing:0.17px;">WEC</div>
<div style="left:205px;top:619px;width:109px;height:20px;background:#ffffe1;"></div>
<div class="c" style="left:205px;top:619px;width:109px;color:#000;padding-left:2px;font-size:11px;letter-spacing:-0.2px;">BANF 123456 1</div>
<div style="left:315px;top:619px;width:64px;height:20px;background:#f0f0f0;"></div>
<div class="c" style="left:315px;top:619px;width:64px;color:#000;padding-left:2px;">02.10.25</div>
<div style="left:380px;top:619px;width:64px;height:20px;background:#f0f0f0;"></div>
<div class="c" style="left:380px;top:619px;width:64px;color:#000;padding-left:2px;">03.10.25</div>
<div style="left:445px;top:619px;width:139px;height:20px;background:#f0f0f0;"></div>
<div class="c" style="left:445px;top:619px;width:139px;color:#000;padding-left:2px;"><span class="u">1100001</span></div>
<div style="left:585px;top:619px;width:209px;height:20px;background:#f0f0f0;"></div>
<div class="c" style="left:585px;top:619px;width:209px;color:#000;padding-left:2px;">*Aceton*</div>
<div style="left:795px;top:619px;width:39px;height:20px;background:#ffffe1;"></div>
<div class="cb" style="left:808px;top:622px;"></div>
<div style="left:835px;top:619px;width:79px;height:20px;background:#f0f0f0;"></div>
<div class="c" style="left:835px;top:619px;width:79px;color:#000;text-align:right;padding-right:2px;">3,00</div>
<div style="left:915px;top:619px;width:49px;height:20px;background:#ffffe1;"></div>
<div class="c" style="left:915px;top:619px;width:49px;color:#000;padding-left:2px;">Stk</div>
<div style="left:965px;top:619px;width:74px;height:20px;background:#ffffe1;"></div>
<div class="c" style="left:965px;top:619px;width:74px;color:#000;text-align:right;padding-right:2px;">0,000</div>
<div style="left:1040px;top:619px;width:74px;height:20px;background:#ffffe1;"></div>
<div class="c" style="left:1040px;top:619px;width:74px;color:#000;text-align:right;padding-right:2px;">0,00</div>
<div style="left:1115px;top:619px;width:95px;height:20px;background:#f0f0f0;"></div>
<div style="left:1211px;top:619px;width:45px;height:20px;background:#f0f0f0;"></div>
<div class="cb" style="left:1227px;top:622px;"></div>
<div style="left:1257px;top:619px;width:141px;height:20px;background:#ffffe1;"></div>
<div class="c" style="left:1257px;top:619px;width:141px;color:#000;padding-left:2px;">EN9100,ISO0815</div>
<div style="left:1399px;top:619px;width:141px;height:20px;background:#ffffe1;"></div>
<div class="c" style="left:1399px;top:619px;width:141px;color:#000;padding-left:2px;">ISO0815</div>
<div style="left:1541px;top:619px;width:54px;height:20px;background:#c1e8a2;"></div>
<div style="left:1560px;top:622px;width:16px;height:13px;"><svg style="left:0;top:0" width="16" height="13"><path d="M0.5 0.5h11.5l3.5 3.5v8.5h-15z" fill="#fbfbfb" stroke="#e0e0e0"/><path d="M12 0.5v3.5h3.5" fill="#e8e8e8" stroke="#d4d4d4"/></svg><div style="left:3px;top:0;width:9px;font-size:11px;line-height:12px;font-style:italic;color:#8e8e8e;text-align:center;">a</div></div>
<div style="left:1596px;top:619px;width:119px;height:20px;background:#ffff80;"></div>
<div class="c" style="left:1596px;top:619px;width:119px;color:#000;padding-left:2px;"><span class="u">STAHL</span></div>
<div style="left:41px;top:639px;width:1675px;height:1px;background:#d6d6d6;"></div>
<div style="left:58px;top:492px;width:1px;height:148px;background:#d6d6d6;"></div>
<div style="left:104px;top:492px;width:1px;height:148px;background:#d6d6d6;"></div>
<div style="left:204px;top:492px;width:1px;height:148px;background:#d6d6d6;"></div>
<div style="left:314px;top:492px;width:1px;height:148px;background:#d6d6d6;"></div>
<div style="left:379px;top:492px;width:1px;height:148px;background:#d6d6d6;"></div>
<div style="left:444px;top:492px;width:1px;height:148px;background:#d6d6d6;"></div>
<div style="left:584px;top:492px;width:1px;height:148px;background:#d6d6d6;"></div>
<div style="left:794px;top:492px;width:1px;height:148px;background:#d6d6d6;"></div>
<div style="left:834px;top:492px;width:1px;height:148px;background:#d6d6d6;"></div>
<div style="left:914px;top:492px;width:1px;height:148px;background:#d6d6d6;"></div>
<div style="left:964px;top:492px;width:1px;height:148px;background:#d6d6d6;"></div>
<div style="left:1039px;top:492px;width:1px;height:148px;background:#d6d6d6;"></div>
<div style="left:1114px;top:492px;width:1px;height:148px;background:#d6d6d6;"></div>
<div style="left:1210px;top:492px;width:1px;height:148px;background:#d6d6d6;"></div>
<div style="left:1256px;top:492px;width:1px;height:148px;background:#d6d6d6;"></div>
<div style="left:1398px;top:492px;width:1px;height:148px;background:#d6d6d6;"></div>
<div style="left:1540px;top:492px;width:1px;height:148px;background:#d6d6d6;"></div>
<div style="left:1595px;top:492px;width:1px;height:148px;background:#d6d6d6;"></div>
<div style="left:1715px;top:492px;width:1px;height:148px;background:#d6d6d6;"></div>
<div style="left:42px;top:577px;width:1673px;height:1px;border-top:1px dotted #d08040;"></div>
<div style="left:42px;top:596px;width:1673px;height:1px;border-top:1px dotted #d08040;"></div>
<div style="left:584px;top:576px;width:211px;height:22px;border:1px dotted #222;"></div>
<div style="left:567px;top:579px;width:16px;height:16px;background:#e4e4e4;border:1px solid #b8b8b8;"><svg style="left:3px;top:6px" width="8" height="2"><path d="M0 0.5h1.4M3 0.5h1.4M6 0.5h1.4" stroke="#222" stroke-width="1.2"/></svg></div>
<div style="left:947px;top:579px;width:16px;height:16px;background:#e4e4e4;border:1px solid #b8b8b8;"><svg style="left:3px;top:6px" width="8" height="2"><path d="M0 0.5h1.4M3 0.5h1.4M6 0.5h1.4" stroke="#222" stroke-width="1.2"/></svg></div>
<div style="left:1698px;top:579px;width:16px;height:16px;background:#e4e4e4;border:1px solid #b8b8b8;"><svg style="left:3px;top:6px" width="8" height="2"><path d="M0 0.5h1.4M3 0.5h1.4M6 0.5h1.4" stroke="#222" stroke-width="1.2"/></svg></div>
<div style="left:1578px;top:578px;width:16px;height:18px;background:#e0e0e0;border:1px solid #9a9a9a;"><svg style="left:3px;top:6px" width="9" height="6"><path d="M0.5 0.5L4.5 4.5L8.5 0.5" stroke="#333" fill="none" stroke-width="1.2"/></svg></div>
<svg style="left:33px;top:436px" width="7" height="11"><path d="M0 0.5h1M0 2.5h1M0 4.5h1M0 6.5h1M0 8.5h1M2 0.5h5M2 2.5h5M2 4.5h5M2 6.5h5M2 8.5h5" stroke="#222" fill="none"/></svg>
<svg style="left:33px;top:458px" width="7" height="11"><path d="M0 0.5h1M0 2.5h1M0 4.5h1M0 6.5h1M0 8.5h1M2 0.5h5M2 2.5h5M2 4.5h5M2 6.5h5M2 8.5h5" stroke="#222" fill="none"/></svg>
<svg style="left:33px;top:582px" width="7" height="11"><path d="M1.5 0.5L6 5L1.5 9.5z" stroke="#000" fill="none"/><path d="M0 3.5h2M0 6.5h2" stroke="#000"/></svg>
<svg style="left:79px;top:407px" width="9" height="10"><path d="M4.500 1.500L7.500 8.500H1.500z" stroke="#9a9a9a" fill="none"/></svg>
<div style="left:30px;top:990px;width:1686px;height:26px;background:#f0f0f0;border-top:1px solid #d8d8d8;"></div>
<div style="left:41px;top:993px;width:17px;height:21px;background:#f0f0f0;border:1px solid #dadada;"></div>
<div class="t" style="left:46px;top:997px;">7</div>
<div style="left:95px;top:1012px;width:758px;height:2px;background:#6a6a6a;"></div>
<svg style="left:5px;top:3px" width="38" height="38"><defs><linearGradient id="lg" x1="0" y1="0" x2="0" y2="1"><stop offset="0" stop-color="#ececf2"/><stop offset="0.55" stop-color="#c4c5d4"/><stop offset="1" stop-color="#b8b9ca"/></linearGradient></defs><circle cx="19" cy="19.2" r="17.9" fill="url(#lg)" stroke="#2c2e3c" stroke-width="1.2"/><rect x="7.200" y="9" width="22" height="19" rx="3.500" fill="#177fb8"/><rect x="9" y="9" width="22" height="19" rx="3.500" fill="#1f9bd8"/><path d="M13 11.500h18v14h-18z" fill="#fff" transform="translate(0,0)"/><path d="M15.500 11.500c2 3 4 5 6 7c-2 2-4.500 4-6 7h4.500c1.500-3 4-5 7-7c-3-2-5-4-7-7z" fill="#1f9bd8"/><rect x="29" y="11" width="2.500" height="15" fill="#1f9bd8"/></svg>
<svg style="left:32px;top:60px" width="14" height="14"><defs><linearGradient id="wg" x1="0" y1="0" x2="1" y2="1"><stop offset="0" stop-color="#fff"/><stop offset="1" stop-color="#d4d4f8"/></linearGradient></defs><rect x="0.700" y="0.700" width="12.600" height="12.600" rx="1.500" fill="url(#wg)" stroke="#1e90ff" stroke-width="1.400"/><path d="M1 3h12" stroke="#1e90ff" stroke-width="1.200"/></svg>
<svg style="left:56px;top:59px" width="15" height="16"><path d="M5.500 0.500h6l3 3v9h-9z" fill="#e6dcf4" stroke="#7a52a8"/><path d="M9 3h3M9 5.500h3M9 8h3" stroke="#9a7ac0" stroke-width="0.800"/><path d="M0.500 3.500h6l3 3v9h-9z" fill="#eef0fa" stroke="#5a6aa8"/><rect x="2" y="9" width="6" height="4.500" fill="#aab4dc"/><path d="M6.500 3.500v3h3" fill="none" stroke="#5a6aa8" stroke-width="0.800"/></svg>
<svg style="left:81px;top:61px" width="13" height="13"><defs><radialGradient id="qg81" cx="0.4" cy="0.3" r="0.8"><stop offset="0" stop-color="#5fd03a"/><stop offset="1" stop-color="#1f8a10"/></radialGradient></defs><circle cx="6.5" cy="7.1" r="6.2" fill="#44465a" opacity="0.55"/><circle cx="6.5" cy="6.5" r="5.9" fill="#f2f2f2" stroke="#c8c8c8" stroke-width="0.6"/><circle cx="6.5" cy="6.5" r="4.5" fill="url(#qg81)"/><text x="6.5" y="9.8" text-anchor="middle" font-family="Liberation Sans,sans-serif" font-weight="bold" font-size="9.1" fill="#fff">?</text></svg>
<svg style="left:107px;top:58px" width="15" height="17"><rect x="0.500" y="2.500" width="11" height="13" fill="#f0b860" stroke="#d89838"/><rect x="3" y="0.500" width="6" height="3" rx="1" fill="#c8c8c8" stroke="#808080" stroke-width="0.800"/><rect x="5.500" y="6.500" width="8.500" height="10" fill="#fff" stroke="#707070"/><path d="M7.500 9.500h5M7.500 11.500h5M7.500 13.500h5" stroke="#2a70c8" stroke-width="1"/></svg>
<svg style="left:137px;top:60px" width="14" height="14"><defs><linearGradient id="gg13760" x1="0" y1="0" x2="1" y2="1"><stop offset="0" stop-color="#e6e6fa"/><stop offset="1" stop-color="#a8a8d8"/></linearGradient></defs><path d="M13.9 6.0L13.9 8.0L11.8 8.1L11.4 9.2L12.9 10.7L11.7 12.2L10.0 10.9L8.9 11.5L9.2 13.7L7.2 14.0L6.8 11.9L5.6 11.7L4.4 13.5L2.7 12.5L3.7 10.6L2.9 9.7L0.8 10.3L0.2 8.5L2.1 7.6L2.1 6.4L0.2 5.5L0.8 3.7L2.9 4.3L3.7 3.4L2.7 1.5L4.4 0.5L5.6 2.3L6.8 2.1L7.2 0.0L9.2 0.3L8.9 2.5L10.0 3.1L11.7 1.8L12.9 3.3L11.4 4.8L11.8 5.9z" fill="url(#gg13760)" stroke="#8486c0" stroke-width="0.9" stroke-linejoin="round"/><circle cx="7.0" cy="7.0" r="1.8" fill="#f8f8fc" stroke="#9496cc" stroke-width="0.8"/></svg>
<svg style="left:160px;top:59px" width="17" height="17"><rect x="4.500" y="0.500" width="10" height="13" fill="#f4f6ff" stroke="#8a9ad8"/><path d="M4.500 0l1.400 3.200l3.400 0.400l-2.500 2.300l0.700 3.400l-3-1.700l-3 1.700l0.700-3.400l-2.500-2.300l3.400-0.400z" fill="#ffc23a" stroke="#e07a10" stroke-width="0.800" transform="translate(0.500,1.500)"/><path d="M8 9l7 6.500" stroke="#222" stroke-width="2"/><path d="M8 9l3 2.800" stroke="#bbb" stroke-width="1"/></svg>
<svg style="left:1476px;top:65px" width="12" height="4"><rect x="0" y="0.500" width="11" height="2.600" fill="#d0402a"/></svg>
<svg style="left:1522px;top:60px" width="14" height="13"><path d="M1 7l4 4.500L13 1.500" stroke="#8cc8a8" stroke-width="2" fill="none"/></svg>
<svg style="left:1570px;top:61px" width="13" height="12"><path d="M1 1l10 10M11 1L1 11" stroke="#e09a8c" stroke-width="2" fill="none"/></svg>
<svg style="left:1616px;top:59px" width="15" height="16"><path d="M11.800 4.800A5.800 5.800 0 1 1 6 3.800" stroke="#2a70c0" stroke-width="1.900" fill="none" transform="translate(1,0.500)"/><path d="M6 0.300l4 3.600l-4 2.600z" fill="#2a70c0" transform="translate(1,0.500)"/></svg>
<svg style="left:1651px;top:59px" width="15" height="16"><ellipse cx="7.500" cy="14" rx="4" ry="1.300" fill="#b0b0d8"/><circle cx="7.500" cy="7" r="6" fill="#e8e8fa" stroke="#b4b4e4" stroke-width="1.400"/><path d="M7.500 7l-2-2" stroke="#6a6aa8" stroke-width="0.900"/></svg>
<svg style="left:1677px;top:60px" width="16" height="15"><path d="M1 2.500l6-2l6.500 2v8.500l-6.500 2.500l-6-2.500z" fill="#f4f4f4" stroke="#b0b0b0" stroke-width="0.700"/><path d="M7 4.500l6.500-2v8.500l-6.500 2.500z" fill="#9a9a9a"/><path d="M7 4.500v9" stroke="#d8d8d8" stroke-width="0.600"/><path d="M5 1.500l1.500 2.800" stroke="#4cc43a" stroke-width="1"/></svg>
<svg style="left:1700px;top:60px" width="16" height="15"><path d="M1 2.500l6-2l6.500 2v8.500l-6.500 2.500l-6-2.500z" fill="#f4f4f4" stroke="#b0b0b0" stroke-width="0.700"/><path d="M7 4.500l6.500-2v8.500l-6.500 2.500z" fill="#9a9a9a"/><path d="M7 4.500v9" stroke="#d8d8d8" stroke-width="0.600"/><path d="M5 1.500l1.500 2.800" stroke="#4cc43a" stroke-width="1"/><path d="M9.500 6.500l5.500 3.500l-5.500 3.500z" fill="#4cc43a" stroke="#2a8a1a" stroke-width="0.600"/></svg>
<svg style="left:53px;top:95px" width="22" height="22"><defs><radialGradient id="qg53" cx="0.4" cy="0.3" r="0.8"><stop offset="0" stop-color="#5fd03a"/><stop offset="1" stop-color="#1f8a10"/></radialGradient></defs><circle cx="11.0" cy="11.6" r="10.7" fill="#44465a" opacity="0.55"/><circle cx="11.0" cy="11.0" r="10.4" fill="#f2f2f2" stroke="#c8c8c8" stroke-width="0.6"/><circle cx="11.0" cy="11.0" r="9.0" fill="url(#qg53)"/><text x="11.0" y="16.5" text-anchor="middle" font-family="Liberation Sans,sans-serif" font-weight="bold" font-size="15.4" fill="#fff">?</text></svg>
<svg style="left:6px;top:86px" width="12" height="15"><path d="M0.500 0.500h10v12l-6 2l-4-2z" fill="#8a8a8a" stroke="#6a6a6a" stroke-width="0.600"/><rect x="1.800" y="1.800" width="3" height="5" fill="#cfe6ff"/><rect x="1.800" y="6.800" width="3" height="5" fill="#6cc83c"/><path d="M4.500 1l5.700-0.300v11.800l-5.700 1.500z" fill="#f2b418" stroke="#c88a08" stroke-width="0.500"/><rect x="5.800" y="2.600" width="2.800" height="1" fill="#fff3c0"/><circle cx="5.900" cy="7.500" r="0.800" fill="#fff"/></svg>
<svg style="left:5px;top:112px" width="14" height="14"><defs><linearGradient id="gg5112" x1="0" y1="0" x2="1" y2="1"><stop offset="0" stop-color="#e6e6fa"/><stop offset="1" stop-color="#a8a8d8"/></linearGradient></defs><path d="M13.9 6.0L13.9 8.0L11.8 8.1L11.4 9.2L12.9 10.7L11.7 12.2L10.0 10.9L8.9 11.5L9.2 13.7L7.2 14.0L6.8 11.9L5.6 11.7L4.4 13.5L2.7 12.5L3.7 10.6L2.9 9.7L0.8 10.3L0.2 8.5L2.1 7.6L2.1 6.4L0.2 5.5L0.8 3.7L2.9 4.3L3.7 3.4L2.7 1.5L4.4 0.5L5.6 2.3L6.8 2.1L7.2 0.0L9.2 0.3L8.9 2.5L10.0 3.1L11.7 1.8L12.9 3.3L11.4 4.8L11.8 5.9z" fill="url(#gg5112)" stroke="#8486c0" stroke-width="0.9" stroke-linejoin="round"/><circle cx="7.0" cy="7.0" r="1.8" fill="#f8f8fc" stroke="#9496cc" stroke-width="0.8"/></svg>
<div style="left:2px;top:887px;width:22px;height:21px;background:#dedede;border:1px solid #c8c9d6;"></div>
<div style="left:2px;top:910px;width:22px;height:21px;background:#dedede;border:1px solid #c8c9d6;"></div>
<div style="left:2px;top:944px;width:22px;height:20px;background:#dedede;border:1px solid #c8c9d6;"></div>
<div style="left:2px;top:967px;width:22px;height:20px;background:#dedede;border:1px solid #c8c9d6;"></div>
<div style="left:2px;top:991px;width:22px;height:47px;background:#dedede;border:1px solid #c8c9d6;"></div>
<div style="left:3px;top:936px;width:20px;height:2px;background:#f4f4f8;"></div>
<svg style="left:4px;top:889px" width="19" height="17"><path d="M2 13.500l2-11c0.500-1.500 1.500-2 3-2h8c-1.500 0.500-2 1.500-2 3l-2 10.500z" fill="#f8f8f8" stroke="#9a9a9a" stroke-width="0.700"/><path d="M1 11.500c1 0 2 0.800 2 2s-1 2-2 2h9c1 0 2-1 2-2" fill="#e0e0e4" stroke="#8a8a8a" stroke-width="0.700"/><path d="M14.500 3.500a1.500 1.500 0 1 0 0-3" fill="#d0d0d8" stroke="#8a8a8a" stroke-width="0.700"/><path d="M11 13.500h7M14.500 10v7" stroke="#18a818" stroke-width="2.600"/></svg>
<svg style="left:4px;top:912px" width="19" height="17"><path d="M0 2l3.500 0.500l1.500 7l-4 2z" fill="#2a2a2a"/><path d="M19 3l-4-2.500l-3.500 5l5 3.500z" fill="#1e4aa8"/><path d="M3.500 5c2-2 5-2.500 7.500-1.500l5 3.500c0.500 3-1 6-4 8c-3 1.500-6.500 0-8-2.500c-1.500-2.500-1.500-5.500-0.500-7.500z" fill="#f2a060" stroke="#c8743a" stroke-width="0.600"/><path d="M6 8c2-1 4-1 6 0M5.500 10.500c2-1 5-1 7 0" stroke="#d88a4a" stroke-width="0.800" fill="none"/></svg>
<svg style="left:7px;top:946px" width="13" height="16"><rect x="0.500" y="0.500" width="11" height="14.500" fill="#fff" stroke="#707070"/><path d="M2 3h8M2 5.500h8M2 8h8" stroke="#7aa8e0" stroke-width="1.200"/><rect x="2" y="10" width="8" height="3.200" fill="#3a70c0"/></svg>
<svg style="left:5px;top:969px" width="16" height="16"><defs><radialGradient id="rg" cx="0.4" cy="0.25" r="0.8"><stop offset="0" stop-color="#ff9a8a"/><stop offset="0.5" stop-color="#f02a10"/><stop offset="1" stop-color="#d01000"/></radialGradient></defs><path d="M4.500 0.500h6l4.500 4.500v6l-4.500 4.500h-6l-4.500-4.500v-6z" fill="url(#rg)"/></svg>
<svg style="left:5px;top:1005px" width="16" height="15"><path d="M7.500 0.800l6.700 12.500h-13.400z" fill="#f8e040" stroke="#b89a18" stroke-width="1.200" stroke-linejoin="round"/><path d="M7.500 4.500v5" stroke="#1a1a1a" stroke-width="1.800"/><circle cx="7.500" cy="11.300" r="1" fill="#1a1a1a"/></svg>
<div style="left:0px;top:635px;width:6px;height:123px;background:#045b92;border:1px solid #0a1a2a;border-left:none;border-radius:0 3px 3px 0;box-shadow:1px 1px 2px rgba(0,0,0,0.45);"></div>
<div style="left:0px;top:659px;width:2px;height:1px;background:#fff;"></div>
<div style="left:0px;top:663px;width:2px;height:1px;background:#fff;"></div>
<div style="left:0px;top:667px;width:2px;height:1px;background:#fff;"></div>
<svg style="left:33px;top:374px" width="16" height="15"><rect x="0.500" y="0.500" width="15" height="14" fill="#f4f0ff" stroke="#606068" stroke-width="0.900"/><rect x="1" y="5" width="14" height="4.500" fill="#ffae38"/><path d="M5.500 0.500v14M10.500 0.500v14M0.500 5h15M0.500 9.500h15" stroke="#c8b8a8" stroke-width="0.700"/></svg>
<svg style="left:55px;top:374px" width="17" height="16"><path d="M3 1.500h12.500l-5 6v6l-2.500 1.500v-7.500z" fill="#bdbdbd" stroke="#707070" stroke-width="0.700"/><ellipse cx="9.200" cy="1.800" rx="6.200" ry="1.300" fill="#fafafa" stroke="#707070" stroke-width="0.700"/><path d="M1 9.500l5 5M6 9.500l-5 5" stroke="#e02010" stroke-width="2"/></svg>
<svg style="left:77px;top:376px" width="16" height="12"><path d="M1 4.500l5-3.500l2.500 1l1 4l-4 3z" fill="#b8b8b8" stroke="#505050" stroke-width="0.800"/><path d="M7 2.500l4.500-1.500l3.500 4l-3 4.500l-4-2z" fill="#d0d0d0" stroke="#505050" stroke-width="0.800"/><circle cx="5.500" cy="8" r="2.600" fill="#a8d4fa" stroke="#e8e8e8" stroke-width="0.800"/><circle cx="12" cy="7.800" r="2.600" fill="#a8d4fa" stroke="#e8e8e8" stroke-width="0.800"/></svg>
<svg style="left:1552px;top:375px" width="13" height="13"><path d="M6.500 0.500v12M0.500 6.500h12" stroke="#d02a1a" stroke-width="2.400"/></svg>
<svg style="left:1588px;top:380px" width="12" height="4"><rect x="0" y="0.500" width="11" height="2.400" fill="#d0402a"/></svg>
<svg style="left:1622px;top:375px" width="14" height="13"><path d="M1 7l4 4.500L13 1.500" stroke="#8cc8a8" stroke-width="2" fill="none"/></svg>
<svg style="left:1657px;top:376px" width="13" height="12"><path d="M1 1l10 10M11 1L1 11" stroke="#e09a8c" stroke-width="2" fill="none"/></svg>
<svg style="left:1691px;top:374px" width="15" height="16"><path d="M11.800 4.800A5.800 5.800 0 1 1 6 3.800" stroke="#2a70c0" stroke-width="1.900" fill="none" transform="translate(1,0.500)"/><path d="M6 0.300l4 3.600l-4 2.600z" fill="#2a70c0" transform="translate(1,0.500)"/></svg>
<div style="left:27px;top:1017px;width:1693px;height:23px;background:#f0f0f0;"></div>
<div style="left:27px;top:1022px;width:61px;height:18px;border:1px solid #a6a6a6;border-right-color:#fff;border-bottom-color:#fff;"></div>
<div style="left:91px;top:1022px;width:176px;height:18px;border:1px solid #a6a6a6;border-right-color:#fff;border-bottom-color:#fff;"></div>
<div style="left:271px;top:1022px;width:79px;height:18px;border:1px solid #a6a6a6;border-right-color:#fff;border-bottom-color:#fff;"></div>
<div style="left:353px;top:1022px;width:176px;height:18px;border:1px solid #a6a6a6;border-right-color:#fff;border-bottom-color:#fff;"></div>
<div style="left:532px;top:1022px;width:105px;height:18px;border:1px solid #a6a6a6;border-right-color:#fff;border-bottom-color:#fff;"></div>
<div style="left:727px;top:1022px;width:76px;height:18px;border:1px solid #a6a6a6;border-right-color:#fff;border-bottom-color:#fff;"></div>
<div style="left:806px;top:1022px;width:95px;height:18px;border:1px solid #a6a6a6;border-right-color:#fff;border-bottom-color:#fff;"></div>
<div style="left:905px;top:1022px;width:102px;height:18px;border:1px solid #a6a6a6;border-right-color:#fff;border-bottom-color:#fff;"></div>
<div style="left:1010px;top:1022px;width:100px;height:18px;border:1px solid #a6a6a6;border-right-color:#fff;border-bottom-color:#fff;"></div>
<div style="left:1113px;top:1022px;width:607px;height:18px;border:1px solid #a6a6a6;border-right-color:#fff;border-bottom-color:#fff;"></div>
<div class="t" style="left:49px;top:1023px;font-size:12px;line-height:16px;height:16px;letter-spacing:-0.13px;letter-spacing:-0.3px;">Erstellt:</div>
<div class="t" style="left:94px;top:1023px;font-size:12px;line-height:16px;height:16px;letter-spacing:-0.13px;">2025-09-18&nbsp; Steffen Angrick</div>
<div class="t" style="left:283px;top:1024px;font-size:12px;line-height:16px;height:16px;letter-spacing:-0.13px;">Bearbeitet:</div>
<div class="t" style="left:356px;top:1023px;font-size:12px;line-height:16px;height:16px;letter-spacing:-0.13px;">2025-09-18&nbsp; Steffen Angrick</div>
<div class="t" style="left:551px;top:1023px;font-size:12px;line-height:16px;height:16px;letter-spacing:-0.13px;">Wiedervorlage:</div>
<div style="left:640px;top:1024px;width:83px;height:14px;border:1px solid #707070;border-radius:2px;background:linear-gradient(#fff,#f4f4f8 50%,#dfe3ea);font-size:11px;line-height:13px;text-align:center;"><span class="u">**</span></div>
<div class="t" style="left:738px;top:1024px;font-size:12px;line-height:16px;height:16px;letter-spacing:-0.13px;color:#0000ff;text-decoration:underline;">Dokument</div>
<div class="t" style="left:834px;top:1024px;font-size:12px;line-height:16px;height:16px;letter-spacing:-0.13px;color:#0000ff;text-decoration:underline;">Notizen</div>
<div class="t" style="left:919px;top:1024px;font-size:12px;line-height:16px;height:16px;letter-spacing:-0.13px;color:#ff0000;text-decoration:underline;">Eigenschaften</div>
<div class="t" style="left:1040px;top:1024px;font-size:12px;line-height:16px;height:16px;letter-spacing:-0.13px;color:#0000ff;text-decoration:underline;">Softlink</div>
<div style="left:0px;top:1040px;width:1720px;height:40px;background:#101010;"></div>
<div style="left:0px;top:1052px;width:2px;height:16px;background:#f8d978;"></div>
<div style="left:114px;top:1040px;width:48px;height:40px;background:#343434;"></div>
<div style="left:20px;top:1078px;width:40px;height:2px;background:#76b9ed;"></div>
<div style="left:114px;top:1078px;width:48px;height:2px;background:#76b9ed;"></div>
<svg style="left:28px;top:1047px" width="24" height="25" viewBox="0 0 24 25"><defs><radialGradient id="ff1" cx="0.7" cy="0.15" r="1"><stop offset="0" stop-color="#fff36b"/><stop offset="0.35" stop-color="#ff9a1f"/><stop offset="0.7" stop-color="#ff3d47"/><stop offset="1" stop-color="#e31587"/></radialGradient><radialGradient id="ff2" cx="0.5" cy="0.4" r="0.6"><stop offset="0" stop-color="#9059ff"/><stop offset="1" stop-color="#5b2bd6"/></radialGradient></defs><path d="M15 0.5c1 2.5 3.5 3.5 5.5 6.5c2 3 2.5 7 1 10.5c-1.800 4-5.500 6.500-10 6.500c-6 0-10.500-4.500-10.500-10.500c0-3 1-5.500 2.500-7.500c0 1 0.500 2 1 2.500c0.500-1.500 2-3 4-3.500c1-1.500 4-2 6.500-5z" fill="url(#ff1)"/><circle cx="11.500" cy="13.500" r="5.200" fill="url(#ff2)"/><path d="M4 11c2-1.500 5-2.500 8-1.500c-2 0.500-3 2-2.500 3.500c-2 0-4-0.500-5.500-2z" fill="#ff9a1f"/></svg>
<svg style="left:77px;top:1048px" width="24" height="24" viewBox="0 0 24 24"><rect x="12" y="5.500" width="11" height="12" fill="#fff"/><path d="M12.500 7l5 4.500l5-4.500" stroke="#0072c6" stroke-width="1.800" fill="none"/><path d="M0.500 3l13-2.500v23l-13-2.500z" fill="#0072c6"/><ellipse cx="7" cy="12" rx="3" ry="3.800" fill="none" stroke="#fff" stroke-width="1.700"/></svg>
<svg style="left:126px;top:1050px" width="25" height="20" viewBox="0 0 25 20"><rect x="0" y="1" width="23" height="18" rx="3.500" fill="#1b7fb3"/><rect x="1.500" y="0.500" width="23" height="18" rx="3.500" fill="#2aa0d8"/><path d="M6 3.500h14v13h-14z" fill="#fff"/><path d="M9 3.500l5.500 6.500l-5.500 6.500h5l5.500-6.500l-5.500-6.500z" fill="#2aa0d8"/></svg>
<div style="left:1475px;top:1052px;width:1px;height:16px;background:#4a4a4a;"></div>
<div style="left:1478px;top:1052px;width:1px;height:16px;background:#3a3a3a;"></div>
<div class="t" style="left:1489px;top:1052px;color:#d8d8d8;font-size:12px;line-height:16px;height:16px;letter-spacing:-0.2px;">Desktop</div>
<svg style="left:1540px;top:1047px" width="9" height="6"><path d="M0.500 0.500L3 3L0.500 5.500M4.500 0.500L7 3L4.500 5.500" stroke="#e8e8e8" stroke-width="1.200" fill="none"/></svg>
<svg style="left:1559px;top:1056px" width="13" height="8"><path d="M0.500 7L6.500 1L12.500 7" stroke="#e8e8e8" stroke-width="1.300" fill="none"/></svg>
<svg style="left:1580px;top:1053px" width="18" height="15"><path d="M3.500 1.500h13v9h-13z" stroke="#e8e8e8" fill="none"/><path d="M10 10.500v3M6.500 13.500h7" stroke="#e8e8e8" fill="none"/><path d="M1.500 1.500h4v3.500h-4z" stroke="#e8e8e8" fill="#101010"/><path d="M3.500 5v8.500h3" stroke="#e8e8e8" fill="none"/></svg>
<div class="t" style="left:1603px;top:1043px;color:#d8d8d8;font-size:12px;line-height:16px;height:16px;width:62px;text-align:center;letter-spacing:-0.3px;">14:24</div>
<div class="t" style="left:1603px;top:1061px;color:#d8d8d8;font-size:12px;line-height:16px;height:16px;width:62px;text-align:center;letter-spacing:-0.5px;">18.09.2025</div>
<svg style="left:1679px;top:1052px" width="17" height="17"><path d="M0.500 0.500h15v11.500h-7l-3.500 3.500v-3.500h-4.500z" fill="#f0f0f0"/><path d="M3 3.500h10M3 6h10M3 8.500h7" stroke="#101010"/><circle cx="13.500" cy="12.500" r="2.500" fill="#101010" stroke="#f0f0f0"/></svg>
<div style="left:1715px;top:1040px;width:1px;height:40px;background:#5a5a5a;"></div>
</body></html>
